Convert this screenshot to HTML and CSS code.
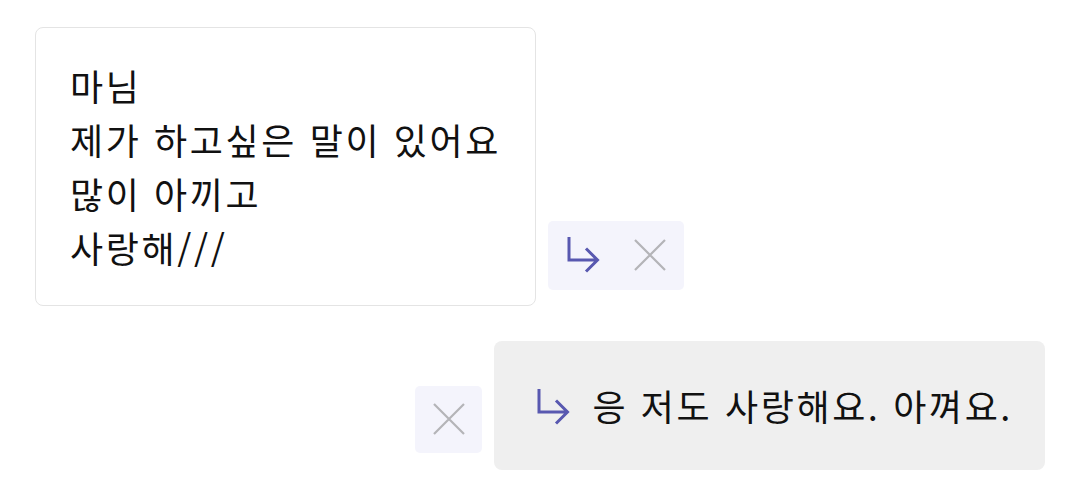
FILE: index.html
```html
<!DOCTYPE html>
<html lang="ko">
<head>
<meta charset="utf-8">
<link rel="stylesheet" href="styles.css">
</head>
<body>
<div class="thread">
  <div class="row row-in">
    <div class="card">
      <p class="msg">마님<br>제가 하고싶은 말이 있어요<br>많이 아끼고<br>사랑해///</p>
    </div>
    <div class="actions actions-wide">
      <button class="icon-btn" aria-label="답장">
        <svg class="ico" width="34" height="38" viewBox="0 0 34 38"><path d="M3 1V24H31M20 12.5L31.5 24L20 35.5" fill="none" stroke="#5858b0" stroke-width="3" stroke-linejoin="miter"/></svg>
      </button>
      <button class="icon-btn" aria-label="닫기">
        <svg class="ico" width="32" height="32" viewBox="0 0 32 32"><path d="M1 1L31 31M31 1L1 31" fill="none" stroke="#b4b4b8" stroke-width="2.2"/></svg>
      </button>
    </div>
  </div>
  <div class="row row-out">
    <div class="actions">
      <button class="icon-btn" aria-label="닫기">
        <svg class="ico" width="32" height="32" viewBox="0 0 32 32"><path d="M1 1L31 31M31 1L1 31" fill="none" stroke="#b4b4b8" stroke-width="2.2"/></svg>
      </button>
    </div>
    <div class="bubble">
      <svg class="ico reply" width="34" height="38" viewBox="0 0 34 38"><path d="M3 1V24H31M20 12.5L31.5 24L20 35.5" fill="none" stroke="#5858b0" stroke-width="3"/></svg>
      <span class="msg">응 저도 사랑해요. 아껴요.</span>
    </div>
  </div>
</div>
</body>
</html>
```
FILE: styles.css
```css
html, body {
  margin: 0;
  padding: 0;
  background: #ffffff;
}
body {
  font-family: "Noto Sans CJK KR", "Noto Sans", sans-serif;
  color: #111111;
}
.thread {
  padding: 27px 35px;
  display: flex;
  flex-direction: column;
  gap: 35px;
}
.row {
  display: flex;
  align-items: flex-end;
  gap: 12px;
}
.row-out {
  justify-content: flex-end;
}
.card {
  border: 1px solid #e4e4e4;
  border-radius: 8px;
  padding: 30px 34px 31px 34px;
  background: #fff;
}
.msg {
  margin: 0;
  font-size: 36px;
  line-height: 54px;
  letter-spacing: 2.6px;
}
.actions {
  display: flex;
  align-items: center;
  gap: 34px;
  background: #f4f4fc;
  border-radius: 5px;
  padding: 17px 17px;
  margin-bottom: 16px;
}
.actions-wide {
  padding: 15px 18px 16px 18px;
}
.row-out .actions {
  margin-bottom: 17px;
  padding: 17px 17px 18px 18px;
}
.icon-btn {
  border: 0;
  padding: 0;
  margin: 0;
  background: none;
  display: flex;
  align-items: center;
  justify-content: center;
}
.ico {
  display: block;
}
.bubble {
  display: flex;
  align-items: center;
  gap: 22px;
  background: #efefef;
  border-radius: 8px;
  padding: 37px 32px 38px 42px;
}
.bubble .reply {
  margin-top: 4px;
}
```
